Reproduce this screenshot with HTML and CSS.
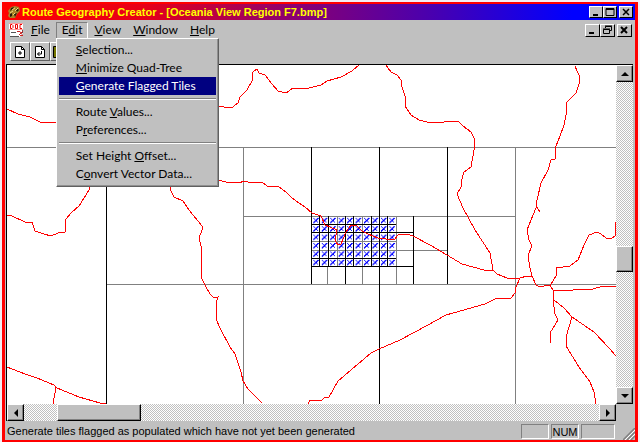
FILE: index.html
```
<!DOCTYPE html>
<html lang="en">
<head>
<meta charset="utf-8">
<title>Route Geography Creator</title>
<link rel="stylesheet" href="styles.css">
</head>
<body>
<div class="window">
  <header class="titlebar">
    <svg class="app-icon" width="14" height="14" viewBox="0 0 14 14" aria-hidden="true">
      <path d="M1 6L4 2L8 1L12 2L13 6L10 9L8 13L3 13L1 11L2 8Z" fill="#a8842a"/>
      <path d="M4 3L7 2L6 4L3 6ZM10 3L12 5L10 7L9 5ZM3 9L5 8L5 11L3 12ZM7 9L10 8L8 12Z" fill="#2a1c08"/>
      <path d="M5 5L8 3M8 6L11 3M3 8L6 6M6 10L8 8" stroke="#e8dc80" stroke-width="1"/>
    </svg>
    <h1 class="title">Route Geography Creator - [Oceania View Region F7.bmp]</h1>
    <div class="controls">
      <button class="ctl" aria-label="Minimize"><svg width="13" height="10" viewBox="0 0 13 10"><path d="M3 8h5" stroke="#000" stroke-width="2"/></svg></button>
      <button class="ctl" aria-label="Maximize"><svg width="13" height="10" viewBox="0 0 13 10"><path d="M2 1.5h8v7h-8zM2 2.5h8" fill="none" stroke="#000"/></svg></button>
      <button class="ctl apart" aria-label="Close"><svg width="13" height="10" viewBox="0 0 13 10"><path d="M3 2l6 6M9 2l-6 6" stroke="#000" stroke-width="1.5"/></svg></button>
    </div>
  </header>

  <div class="menubar">
    <svg class="doc-icon" width="16" height="16" viewBox="0 0 16 16" aria-hidden="true">
      <path d="M0 1h14v10l-3 4H1V8H0z" fill="#fff"/>
      <path d="M0 1.5h14M0 7.500h14" stroke="#f99"/>
      <path d="M1.500 2.500v4h1.500l1-1v-2l-1-1zM6.500 2.500h2v4h-2zM13 2.500h-2v4h2" fill="none" stroke="#e00"/>
      <path d="M2 10.500h5M13.500 8v3M1 14.500h9" fill="none" stroke="#555"/>
      <path d="M8 9.500h3l2 3M14 9l-4 4M11 13.500h3" fill="none" stroke="#c22"/>
    </svg>
    <nav class="menus">
      <button class="menu"><u>F</u>ile</button>
      <div class="menu-holder">
        <button class="menu open" aria-expanded="true">E<u>d</u>it</button>
        <div class="dropdown">
          <button class="item"><u>S</u>election...</button>
          <button class="item"><u>M</u>inimize Quad-Tree</button>
          <button class="item selected"><u>G</u>enerate Flagged Tiles</button>
          <hr class="rule">
          <button class="item">Route <u>V</u>alues...</button>
          <button class="item">P<u>r</u>eferences...</button>
          <hr class="rule">
          <button class="item">Set Height <u>O</u>ffset...</button>
          <button class="item">C<u>o</u>nvert Vector Data...</button>
        </div>
      </div>
      <button class="menu"><u>V</u>iew</button>
      <button class="menu"><u>W</u>indow</button>
      <button class="menu"><u>H</u>elp</button>
    </nav>
    <div class="controls child">
      <button class="ctl" aria-label="Minimize document"><svg width="13" height="10" viewBox="0 0 13 10"><path d="M3 8h5" stroke="#000" stroke-width="2"/></svg></button>
      <button class="ctl" aria-label="Restore document"><svg width="13" height="10" viewBox="0 0 13 10"><path d="M4.500 3V1.500h6v4H9M2.500 4.500h6v4h-6zM4 1h7M2 4h7" fill="none" stroke="#000"/></svg></button>
      <button class="ctl apart" aria-label="Close document"><svg width="13" height="10" viewBox="0 0 13 10"><path d="M3 2l6 6M9 2l-6 6" stroke="#000" stroke-width="2"/></svg></button>
    </div>
  </div>

  <div class="toolbar">
    <button class="tool" aria-label="New"><svg width="12" height="12" viewBox="0 0 12 12"><path d="M1.500 0.500h6l3 3v8h-9z" fill="#fff" stroke="#000"/><path d="M7.500 0.500v3h3M6 5v4M4 7h4" fill="none" stroke="#000"/></svg></button>
    <button class="tool" aria-label="Open"><svg width="12" height="12" viewBox="0 0 12 12"><path d="M1.500 0.500h6l3 3v8h-9z" fill="#fff" stroke="#000"/><path d="M7.500 0.500v3h3M7.500 5v3h-4M5.500 6l-2 2l2 2" fill="none" stroke="#000"/></svg></button>
    <button class="tool" aria-label="Save"><svg width="14" height="12" viewBox="0 0 14 12"><path d="M0.500 0.500h13v11h-13z" fill="#770" stroke="#000"/><path d="M4 1h6v4H4z" fill="#ccc"/></svg></button>
  </div>

  <main class="workspace">
    <svg class="map" viewBox="7 65 609 339" preserveAspectRatio="xMinYMin slice" role="img" aria-label="Region map">
      <defs>
        <pattern id="flag" x="311.500" y="216" width="8.450" height="8.400" patternUnits="userSpaceOnUse">
          <path d="M2 2l5 5M7 2l-5 5" stroke="#00f" stroke-width="1"/>
        </pattern>
      </defs>
      <path class="flags" d="M311.500 216h85v50h-85z" fill="url(#flag)"/>
      <g class="minor">
        <path d="M7 147.500H616M106 284.500H616M243 216.500H516M396 250.500H447"/>
        <path d="M243.500 147V404M515.500 147V404M327.500 266V284M362.500 266V284M396.500 216V284"/>
        <path d="M311 241.500h85M311 250.500h85M337.500 216v50M362.500 216v50"/>
      </g>
      <g class="major">
        <path d="M106.500 147V404M311.500 147V284M379.500 147V404M447.500 147V284M413.500 216V284M345.500 216V284"/>
        <path d="M311 232.500H413M311 266.500H413M311 224.500h85M311 258.500h85"/>
        <path d="M319.500 216v50M328.500 216v50M353.500 216v50M371.500 216v50M387.500 216v50"/>
      </g>
      <g class="roads">
        <path d="M7 109L18 114L30 117L40 122H57"/>
        <path d="M218 106L224 107L232 108L234 106L238 103L240 97L247 90L252 81L253 72L257 69L259 73L265 75L272 84L278 91L286 93L293 88H309L321 85L327 81L341 77L352 71L359 65"/>
        <path d="M386 65L388 68L391 72L397 75L401 80L402 87L405 96V106L411 115L419 120L427 122L438 123L444 122L458 121L463 126L471 132L475 140L474 150L471 167L464 172L461 182V187L457 194L463 208L475 230L490 253L493 270L497 274L507 278H520L527 276H532"/>
        <path d="M218 180L226 182L239 183L244 181L252 183L262 182L267 186L279 187L286 192L292 198L299 203L305 207L312 213L321 216L325 225L337 230L335 241L338 245L341 244L346 232L351 225H356L362 231L368 234L378 238L394 240L398 235L407 234L413 236L430 245L447 255L462 264L484 270H494"/>
        <path d="M575 66L577 71L579 75V84L576 93L567 102L566 115L564 125L560 136L556 146L555 159L551 160L548 170L541 183L537 200L536 208L531 220L527 230L529 240L532 246L528 255L530 268L532 276L536 285L540 287L548 285L550 286L556 276V268L570 266L578 260L584 245L589 235L597 232L601 234L606 238L611 239L615 236V222"/>
        <path d="M536 206L540 212M550 286L554 291L593 289L603 286H616"/>
        <path d="M554 290L553 300L555 314L558 320L550 333L551 343"/>
        <path d="M554 300L564 308L572 317L594 332L609 348L616 356M572 317L566 337V346L579 367L590 382L594 392L596 404"/>
        <path d="M520 278L516 287L515 293L511 298L495 299L485 304L446 315L428 325L400 340L379 349L371 353L338 381L329 397L324 398L321 401L310 400L308 404"/>
        <path d="M170 186L171 191L174 197L183 201L189 210L202 226V230L199 238L201 246V277L205 285L210 294L214 298L218 297L216 304V319L220 328L230 347L235 354L241 372L243 381L248 389L262 403"/>
        <path d="M89 187V190L79 206L72 212L66 219L65 232L58 233L51 236L44 234L35 231L32 222L27 223L10 215L7 216"/>
        <path d="M7 367L25 374L37 378L54 385L57 388L79 397L100 403L106 404M56 387L53 404"/>
      </g>
    </svg>
    <div class="scroll vertical">
      <button class="arrow" aria-label="Scroll up"><svg width="8" height="4" viewBox="0 0 8 4"><path d="M4 0L8 4H0z"/></svg></button>
      <div class="gap v-before"></div>
      <div class="thumb v-thumb"></div>
      <div class="gap v-after"></div>
      <button class="arrow" aria-label="Scroll down"><svg width="8" height="4" viewBox="0 0 8 4"><path d="M0 0H8L4 4z"/></svg></button>
    </div>
    <div class="scroll horizontal">
      <button class="arrow" aria-label="Scroll left"><svg width="4" height="8" viewBox="0 0 4 8"><path d="M4 0V8L0 4z"/></svg></button>
      <div class="gap h-before"></div>
      <div class="thumb h-thumb"></div>
      <div class="gap h-after"></div>
      <button class="arrow" aria-label="Scroll right"><svg width="4" height="8" viewBox="0 0 4 8"><path d="M0 0L4 4L0 8z"/></svg></button>
    </div>
    <div class="corner"></div>
  </main>

  <footer class="status">
    <p class="message">Generate tiles flagged as populated which have not yet been generated</p>
    <span class="pane"></span>
    <span class="pane">NUM</span>
    <span class="pane wide"></span>
    <svg class="grip" width="12" height="12" viewBox="0 0 12 12" aria-hidden="true"><path d="M0 12L12 0M4 12L12 4M8 12L12 8" stroke="#808080" stroke-width="1.500"/><path d="M2 12L12 2M6 12L12 6" stroke="#fff"/></svg>
  </footer>
</div>
</body>
</html>
```
FILE: styles.css
```
* {
  box-sizing: border-box;
}

body {
  margin: 0;
  height: 100vh;
  padding: 2px 2px 0 2px;
  background: #f4eef4;
  color: #000;
  font: 12px/16px Lato, "Liberation Sans", Arial, sans-serif;
  overflow: hidden;
}

button {
  margin: 0;
  padding: 0;
  border: 0;
  background: #c0c0c0;
  color: inherit;
  font: inherit;
}

.window {
  display: flex;
  flex-direction: column;
  height: 100%;
  border: 3px solid #f00;
  border-width: 2px 3px 2px 3px;
  background: #c0c0c0;
}

.titlebar {
  display: flex;
  align-items: center;
  height: 16px;
  padding: 0 2px;
  background: linear-gradient(90deg, #f00 0%, #e60018 22%, #90006c 44%, #4800b0 68%, #00f 90%);
}

.title {
  flex: 1;
  margin: 0 0 0 1px;
  color: #ff0;
  font: bold 11px/17px "Liberation Sans", Arial, sans-serif;
  white-space: nowrap;
}

.controls {
  display: flex;
}

.ctl {
  display: flex;
  align-items: center;
  justify-content: center;
  width: 14px;
  height: 12px;
  border: 1px solid;
  border-color: #fff #000 #000 #fff;
  overflow: hidden;
}

.ctl svg {
  flex: none;
}

.apart {
  margin-left: 2px;
}

.menubar {
  display: flex;
  align-items: center;
  height: 20px;
  padding: 0 3px 0 4px;
}

.menus {
  display: flex;
  flex: 1;
}

.menu {
  height: 17px;
  padding: 0 5px;
  border: 1px solid transparent;
  line-height: 14px;
}

.menu.open {
  border-color: #808080 #fff #fff #808080;
}

.menu-holder {
  position: relative;
}

.dropdown {
  position: absolute;
  top: 16px;
  left: 0;
  z-index: 2;
  width: 163px;
  padding: 2px 2px 3px;
  border: 1px solid;
  border-color: #fff #606060 #606060 #fff;
  box-shadow: inset -1px -1px #909090;
  background: #c0c0c0;
}

.item {
  display: block;
  width: 100%;
  height: 18px;
  padding: 0 0 0 17px;
  text-align: left;
  white-space: nowrap;
}

.item.selected {
  background: #000080;
  color: #fff;
}

.rule {
  height: 2px;
  margin: 3px 0;
  border: solid;
  border-width: 1px 0;
  border-color: #808080 transparent #fff;
}

.child .ctl {
  width: 15px;
  height: 13px;
}

.toolbar {
  display: flex;
  height: 24px;
  padding: 2px 5px;
}

.tool {
  display: flex;
  align-items: center;
  justify-content: center;
  width: 20px;
  height: 19px;
  border: 1px solid;
  border-color: #fff #606060 #606060 #fff;
}

.workspace {
  display: grid;
  flex: 1;
  grid-template-columns: minmax(0, 1fr) 17px;
  grid-template-rows: minmax(0, 1fr) 17px;
  min-height: 0;
  margin: 0 2px 0 1px;
  border: solid #000;
  border-width: 1px 0 0 1px;
}

.map {
  display: block;
  width: 100%;
  height: 100%;
  background: #fff;
  shape-rendering: crispEdges;
}

.flags {
  shape-rendering: auto;
}

.map g {
  fill: none;
  stroke-width: 1;
}

.minor {
  stroke: #808080;
}

.major {
  stroke: #000;
}

.roads {
  stroke: #f00;
}

.scroll {
  display: flex;
  background: repeating-conic-gradient(#c0c0c0 0 25%, #fff 0 50%) 0 0 / 2px 2px;
}

.vertical {
  flex-direction: column;
}

.arrow {
  display: flex;
  flex: none;
  align-items: center;
  justify-content: center;
  width: 17px;
  height: 17px;
}

.arrow,
.thumb {
  border: 1px solid;
  border-color: #fff #000 #000 #fff;
  box-shadow: inset -1px -1px #808080;
  background: #c0c0c0;
}

.v-before { flex: 165; }
.v-thumb { flex: 24; }
.v-after { flex: 116; }
.h-before { flex: 33; }
.h-thumb { flex: 82; }
.h-after { flex: 460; }

.corner {
  background: #c0c0c0;
}

.status {
  display: flex;
  align-items: center;
  gap: 2px;
  height: 19px;
  padding: 1px 0 0 2px;
  font: 11px/16px "Liberation Sans", Arial, sans-serif;
}

.message {
  flex: 1;
  margin: 0;
  white-space: nowrap;
}

.pane {
  width: 28px;
  height: 15px;
  border: 1px solid;
  border-color: #808080 #fff #fff #808080;
  line-height: 14px;
  text-align: center;
}

.pane.wide {
  width: 34px;
}

.grip {
  align-self: flex-end;
  margin-left: 6px;
}
```
